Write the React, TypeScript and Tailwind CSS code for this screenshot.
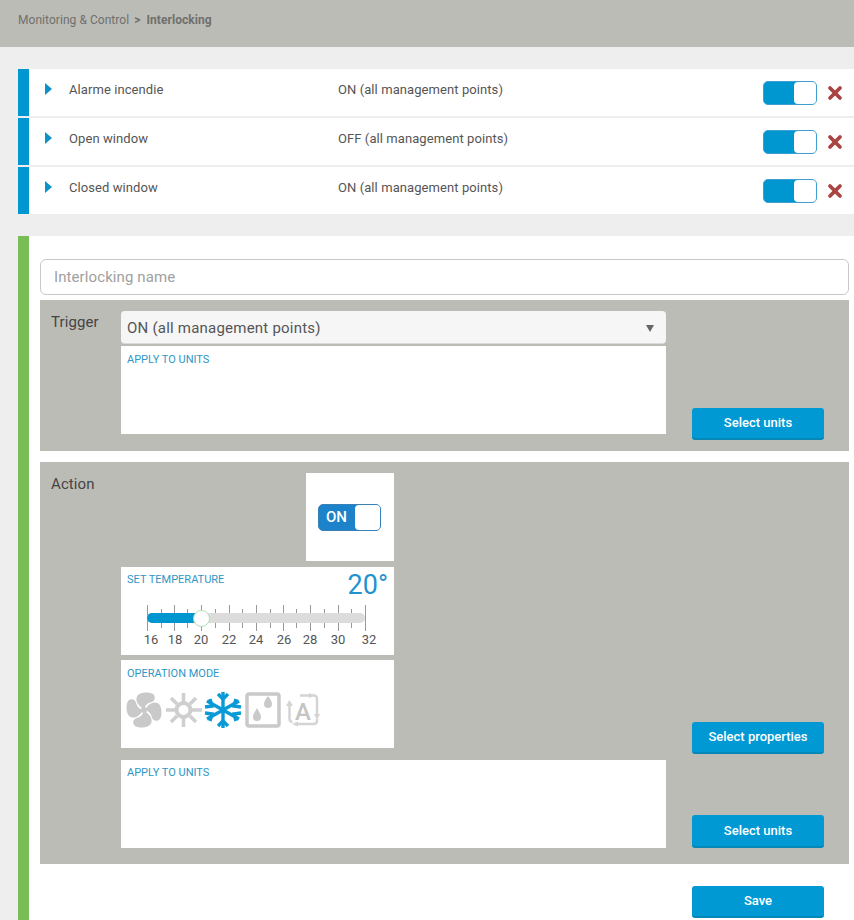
import { X } from "lucide-react";

const rules = [
  { name: "Alarme incendie", trigger: "ON (all management points)" },
  { name: "Open window", trigger: "OFF (all management points)" },
  { name: "Closed window", trigger: "ON (all management points)" },
];

const scale = [
  { label: "16", className: "w-[24px]" },
  { label: "18", className: "w-[24px]" },
  { label: "20", className: "w-[28px]" },
  { label: "22", className: "w-[28px]" },
  { label: "24", className: "w-[26px]" },
  { label: "26", className: "w-[30px]" },
  { label: "28", className: "w-[22px]" },
  { label: "30", className: "w-[34px]" },
  { label: "32", className: "w-[28px]" },
];

const tickX = [147, 161, 174, 187, 201, 215, 229, 242, 256, 270, 283, 296, 310, 324, 338, 351, 365];

function Toggle() {
  return (
    <div className="flex h-[24px] w-[54px] justify-end rounded-[5px] border border-[#3f9fd0] bg-[#0096d0]">
      <div className="h-[22px] w-[22px] rounded-[4px] bg-white" />
    </div>
  );
}

function SmallTitle({ children }: { children: string }) {
  return <div className="text-[11px] leading-[14px] text-[#2f96c4]">{children}</div>;
}

function ActionButton({ label, tall }: { label: string; tall?: boolean }) {
  return (
    <button
      className={`${tall ? "h-[33px]" : "h-[32px]"} w-[132px] rounded-[3px] border-b-2 border-[#0587b8] bg-[#0099d3] text-[13px] font-medium text-white`}
    >
      {label}
    </button>
  );
}

function SliderTicks() {
  return (
    <svg width="220" height="28" viewBox="0 0 220 28" className="absolute left-[26px] top-[37px]">
      {tickX.map((x, i) => (
        <line
          key={x}
          x1={x - 146.5}
          x2={x - 146.5}
          y1={i % 2 === 0 ? 1 : 5}
          y2={i % 2 === 0 ? 27 : 24}
          stroke="#999999"
          strokeWidth="1"
        />
      ))}
    </svg>
  );
}

function FanIcon() {
  const blade = "M18 17C12 14 9 9 11 4.500 13 0 23-.5 27 2 30 4.500 29 9 25.500 10 22 11 20 12 18 17z";
  return (
    <svg width="38" height="36" viewBox="0 0 36 36" fill="#c9c9c9">
      <path d={blade} />
      <path d={blade} transform="rotate(90 18 18)" />
      <path d={blade} transform="rotate(180 18 18)" />
      <path d={blade} transform="rotate(270 18 18)" />
      <circle cx="18" cy="18" r="3" />
    </svg>
  );
}

function SunIcon() {
  return (
    <svg width="36" height="36" viewBox="0 0 36 36" fill="none" stroke="#cfcfcf">
      <circle cx="17.500" cy="18" r="7" strokeWidth="4" />
      <path
        d="M17.500 1v9M17.500 26v9M0 18h9M26 18h10M5 6l6 6M24 24l6 6M5 30l6-6M24 12l6-6"
        strokeWidth="3.500"
      />
    </svg>
  );
}

function SnowIcon() {
  return (
    <svg width="38" height="36" viewBox="0 0 38 36" fill="none" stroke="#0a9bd6" strokeWidth="3.400">
      <path d="M19 0v36M3 9l32 18M3 27l32-18" />
      <path d="M14 2l5 5 5-5M14 34l5-5 5 5" />
      <path d="M1 15l7-1-2-7M37 15l-7-1 2-7M1 21l7 1-2 7M37 21l-7 1 2 7" />
    </svg>
  );
}

function DropIcon() {
  return (
    <svg width="36" height="36" viewBox="0 0 36 36" fill="none">
      <rect x="2" y="2" width="32" height="32" rx="2" stroke="#c9c9c9" strokeWidth="3.500" />
      <path d="M23 4c2 3 4 5 4 8a4 4 0 0 1-8 0c0-3 2-5 4-8z" fill="#c9c9c9" />
      <path d="M12 16c2 4 4 6 4 9a4 4 0 0 1-8 0c0-3 2-5 4-9z" fill="#c9c9c9" />
    </svg>
  );
}

function AutoIcon() {
  return (
    <svg width="34" height="34" viewBox="0 0 34 34" fill="none" stroke="#d4d4d4">
      <path d="M14 2.500h14a3 3 0 0 1 3 3v16M31 26v2a3 3 0 0 1-3 3H9M3.500 12v14a3 3 0 0 0 3 3" strokeWidth="2.500" />
      <path d="M23 0l6 2.500-6 2.500zM12 28.500l-6 2.500 6 2.500zM28 21l3 6 3-6zM0 13l3.500-6 3.500 6z" fill="#d4d4d4" stroke="none" />
      <text x="17" y="27" textAnchor="middle" fontSize="24" fontWeight="500" fontFamily="Roboto, sans-serif" fill="#c4c4c4" stroke="none">
        A
      </text>
    </svg>
  );
}

export default function App() {
  return (
    <div className="min-h-[920px] overflow-hidden bg-[#eeeeee] font-['Roboto',sans-serif] text-[#555]">
      <div className="h-[47px] bg-[#bcbcb7] pl-[18px] pt-[13px] text-[12px] leading-[15px] tracking-[0.05px] text-[#6f706d]">
        Monitoring &amp; Control <b className="ml-[2px] font-bold">&gt;</b>{" "}
        <b className="ml-[3px] font-bold">Interlocking</b>
      </div>

      <div className="ml-[18px] mt-[22px] flex flex-col gap-[2px]">
        {rules.map((rule) => (
          <div key={rule.name} className="flex h-[47px] border-l-[11px] border-[#0096d0] bg-white">
            <span className="ml-[16px] mt-[14px] h-0 w-0 border-y-[6px] border-l-[7px] border-y-transparent border-l-[#0b93c9]" />
            <div className="ml-[17px] mt-[13px] w-[269px] text-[13px] leading-[16px] tracking-[0.08px]">{rule.name}</div>
            <div className="mt-[13px] text-[13px] leading-[16px] tracking-[0.08px]">{rule.trigger}</div>
            <div className="ml-auto mr-[9px] mt-[12px] flex gap-[8px]">
              <Toggle />
              <X size={20} strokeWidth={4.5} className="mt-[2px] text-[#a94442]" />
            </div>
          </div>
        ))}
      </div>

      <div className="ml-[18px] mt-[22px] border-l-[11px] border-[#79bd56] bg-white pb-[2px] pl-[11px] pr-[5px] pt-[23px]">
        <input
          placeholder="Interlocking name"
          className="block h-[36px] w-full rounded-[6px] border border-[#c8c8c8] bg-white px-[13px] text-[15px] tracking-[0.1px] outline-none placeholder:text-[#a0a0a0]"
        />

        <div className="mt-[5px] flex h-[151px] bg-[#bcbcb7] pb-[11px] pt-[11px]">
          <div className="w-[81px] pl-[11px] pt-[2px] text-[15px] leading-[18px] tracking-[0.1px] text-[#444]">Trigger</div>
          <div className="w-[545px]">
            <div className="flex h-[33px] items-center justify-between rounded-[4px] border-b border-[#dadada] bg-[#f6f6f6] pl-[6px] pr-[12px] pt-[2px] text-[15px] tracking-[0.22px]">
              ON (all management points)
              <span className="h-0 w-0 border-x-[4px] border-t-[7px] border-x-transparent border-t-[#666]" />
            </div>
            <div className="mt-[2px] h-[88px] bg-white px-[6px] pt-[7px]">
              <SmallTitle>APPLY TO UNITS</SmallTitle>
            </div>
          </div>
          <div className="ml-[26px] flex flex-col justify-end">
            <ActionButton label="Select units" />
          </div>
        </div>

        <div className="mt-[11px] flex h-[402px] bg-[#bcbcb7] pb-[16px] pt-[11px]">
          <div className="w-[81px] pl-[11px] pt-[2px] text-[15px] leading-[18px] tracking-[0.1px] text-[#444]">Action</div>
          <div className="w-[545px]">
            <div className="ml-[185px] flex h-[88px] w-[88px] items-center justify-center bg-white pr-[1px]">
              <div className="flex h-[27px] w-[63px] justify-end rounded-[5px] border border-[#3a80b8] bg-[#1c83cb] pl-[7px]">
                <span className="mr-auto text-[15px] font-medium leading-[25px] text-white">ON</span>
                <div className="h-[25px] w-[25px] rounded-[4px] bg-white" />
              </div>
            </div>

            <div className="relative mt-[6px] h-[88px] w-[273px] bg-white">
              <div className="flex justify-between pl-[6px] pr-[6px] pt-[5px]">
                <div className="pt-[1px]">
                  <SmallTitle>SET TEMPERATURE</SmallTitle>
                </div>
                <div className="text-[27px] leading-[27px] text-[#1f93cf]">20°</div>
              </div>
              <SliderTicks />
              <div className="relative z-10 ml-[26px] mt-[14px] h-[10px] w-[218px] rounded-[5px] bg-[#dcdcdc]">
                <div className="h-[10px] w-[48px] rounded-l-[5px] bg-[#0096d0]" />
                <div className="absolute left-[46px] top-[-3px] h-[17px] w-[17px] rounded-full border border-[#b5dcb5] bg-white" />
              </div>
              <div className="ml-[18px] mt-[9px] flex text-[13px] leading-[16px] text-[#555]">
                {scale.map((tick) => (
                  <span key={tick.label} className={tick.className + " text-center"}>
                    {tick.label}
                  </span>
                ))}
              </div>
            </div>

            <div className="mt-[5px] h-[88px] w-[273px] bg-white px-[6px] pt-[7px]">
              <SmallTitle>OPERATION MODE</SmallTitle>
              <div className="-ml-[2px] mt-[11px] flex items-center">
                <FanIcon />
                <div className="ml-[3px]">
                  <SunIcon />
                </div>
                <div className="ml-[2px]">
                  <SnowIcon />
                </div>
                <div className="ml-[3px]">
                  <DropIcon />
                </div>
                <div className="ml-[5px]">
                  <AutoIcon />
                </div>
              </div>
            </div>

            <div className="mt-[12px] h-[88px] bg-white px-[6px] pt-[6px]">
              <SmallTitle>APPLY TO UNITS</SmallTitle>
            </div>
          </div>
          <div className="ml-[26px] flex flex-col justify-end gap-[61px]">
            <ActionButton label="Select properties" />
            <ActionButton label="Select units" tall />
          </div>
        </div>

        <div className="ml-[652px] mt-[22px]">
          <ActionButton label="Save" />
        </div>
      </div>
    </div>
  );
}
